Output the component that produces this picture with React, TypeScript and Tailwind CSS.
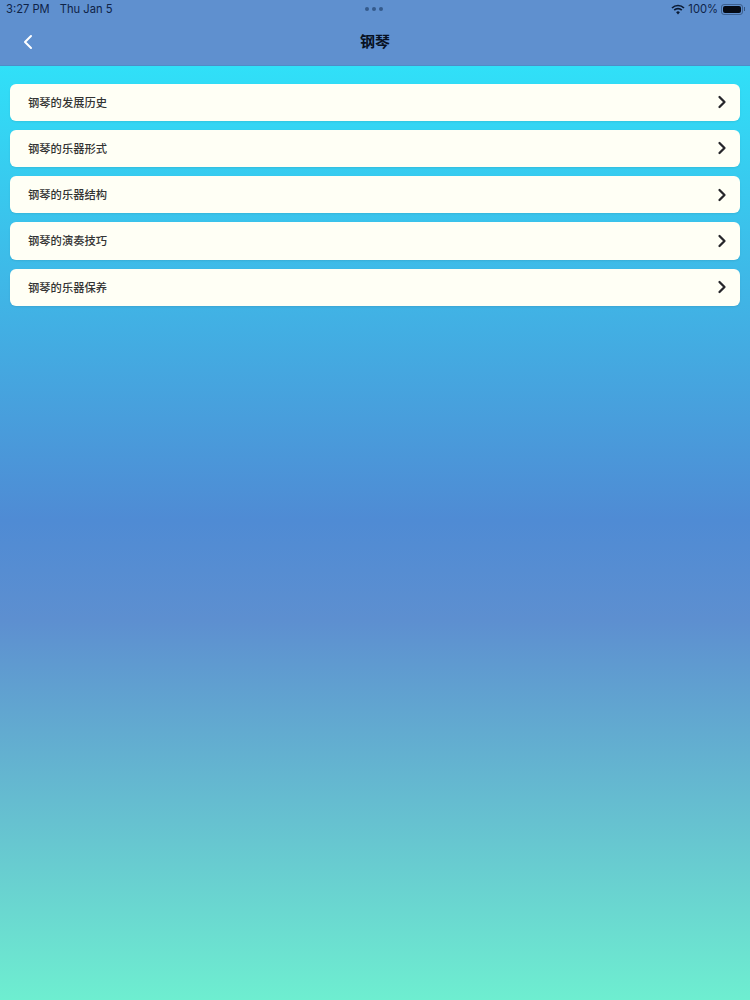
import { ChevronRight, ChevronLeft } from "lucide-react";

const items = ["钢琴的发展历史", "钢琴的乐器形式", "钢琴的乐器结构", "钢琴的演奏技巧", "钢琴的乐器保养"];
const font = "font-['Inter','Noto_Sans_CJK_SC',sans-serif]";

function Wifi() {
  return (
    <svg width="14" height="11" viewBox="0 0 14 11" className="text-[#0b1a33]">
      <path d="M1 4 A8.5 8.5 0 0 1 13 4" fill="none" stroke="currentColor" strokeWidth="1.7" />
      <path d="M3.2 6.2 A5.4 5.4 0 0 1 10.8 6.2" fill="none" stroke="currentColor" strokeWidth="1.7" />
      <path d="M5.1 8.3 A2.7 2.7 0 0 1 8.9 8.3 L7 10.4 Z" fill="currentColor" />
    </svg>
  );
}

function Battery() {
  return (
    <div className="flex items-center gap-[1px]">
      <div className="w-[22px] h-[11px] rounded-[3px] border border-[#0b1a33]/40 p-[1px]">
        <div className="w-full h-full rounded-[2px] bg-[#050a14]" />
      </div>
      <div className="w-[1px] h-[4px] bg-[#0b1a33]/50" />
    </div>
  );
}

export default function App() {
  return (
    <div className={`${font} w-[750px] h-[1000px] flex flex-col overflow-hidden bg-[linear-gradient(180deg,#30e0f8_66px,#4f8bd4_520px,#5d8fd0_620px,#6eeed0_1000px)]`}>
      <header className="relative h-[66px] shrink-0 bg-[#5f90cf] border-b border-[#4f8cc8]">
        <div className="flex h-[19px] items-center justify-between pl-[6px] pr-[5px] text-[11.2px] text-[#0f2347]">
          <div className="flex gap-[10px]">
            <span>3:27 PM</span>
            <span>Thu Jan 5</span>
          </div>
          <div className="flex items-center gap-[3px]">
            <Wifi />
            <span>100%</span>
            <Battery />
          </div>
        </div>
        <div className="absolute left-[365px] top-[7px] flex gap-[3px]">
          <div className="w-[4px] h-[4px] rounded-full bg-[#345a8c]" />
          <div className="w-[4px] h-[4px] rounded-full bg-[#345a8c]" />
          <div className="w-[4px] h-[4px] rounded-full bg-[#345a8c]" />
        </div>
        <div className="flex h-[45px] items-center pl-[16px]">
          <ChevronLeft size={24} strokeWidth={2} color="#ffffff" />
          <h1 className="flex-1 pr-[40px] pt-[2px] text-center text-[15px] font-bold text-[#071022]">钢琴</h1>
        </div>
      </header>
      <main className="flex flex-col gap-[9px] pt-[17.5px] px-[10px]">
        {items.map((t) => (
          <div key={t} className="flex h-[37.25px] items-center justify-between rounded-[6px] bg-[#fffff5] pl-[18px] pr-[8px] shadow-[0_1px_2px_rgba(0,0,0,0.08)]">
            <span className="pt-[2px] text-[11.3px] font-medium text-[#333333]">{t}</span>
            <ChevronRight size={20} strokeWidth={2.75} color="#26262b" />
          </div>
        ))}
      </main>
    </div>
  );
}
